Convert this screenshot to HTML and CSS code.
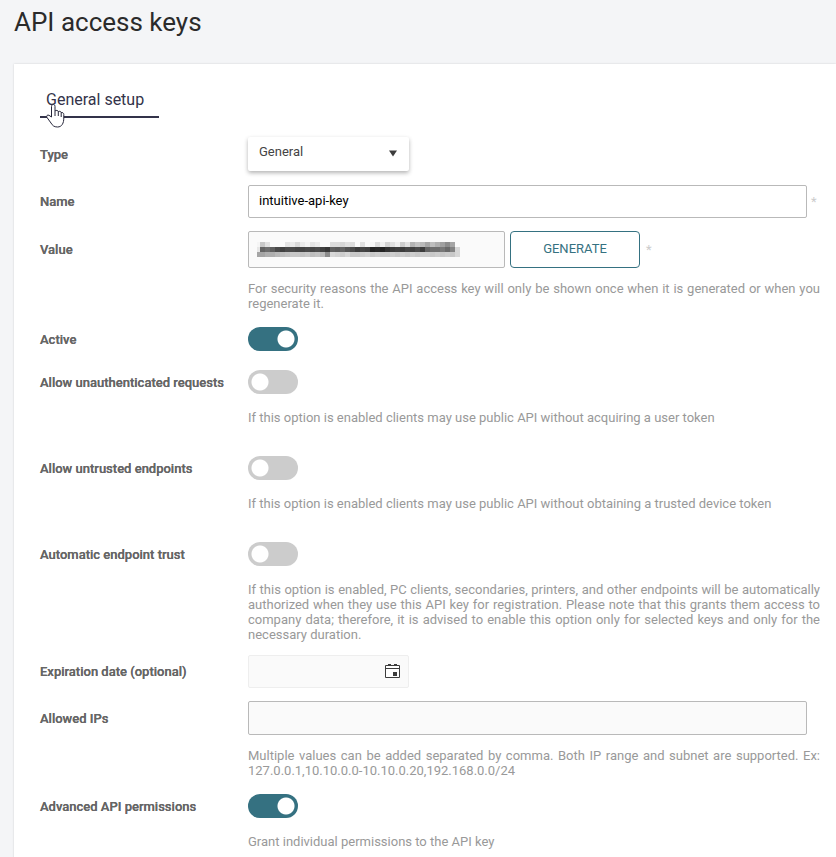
FILE: index.html
```html
<!DOCTYPE html>
<html lang="en">
  <head>
    <meta charset="UTF-8" />
    <meta name="viewport" content="width=device-width, initial-scale=1.0" />
    <title>API access keys</title>
    <link rel="stylesheet" href="styles.css">
  </head>
  <body>
    <h1 class="page-title">API access keys</h1>
    <main class="card">
      <nav class="tabs">
        <a class="tab" href="#general">General setup
          <svg class="pointer" width="20" height="26" viewBox="0 0 20 26">
            <path d="M5.500 14V3.500C5.500 .8 9 .8 9 3.500V8C10 7 12 7.200 12.300 8.600C13.500 8 15 8.300 15.200 9.600C16.500 9.200 17.800 10 17.800 11.500V15C17.800 20 16 24 11.500 24C8 24 6.500 22.500 5 20L1 14.500C0 12.800 1.500 11.500 3 12.300Z" fill="#fff" stroke="#26263a"/>
            <path d="M9 8v5M12.300 8.600V13M15.200 9.600V14" fill="none" stroke="#26263a"/>
          </svg>
        </a>
      </nav>
      <form class="form" id="general">
        <label for="type">Type</label>
        <div class="field type-field">
          <div class="select-box">
            <select id="type"><option>General</option><option>Custom</option></select>
            <svg class="caret" width="9" height="7" viewBox="0 0 9 7"><path d="M0 0h9L4.500 7z" fill="#3c3c3c"/></svg>
          </div>
        </div>

        <label for="name">Name</label>
        <div class="field">
          <input class="text-input" type="text" id="name" value="intuitive-api-key" />
          <span class="required">*</span>
        </div>

        <label for="value">Value</label>
        <div class="field">
          <div class="value-box">
            <input class="text-input tall" type="text" id="value" disabled />
            <svg class="mask" id="mask" width="206" height="20" shape-rendering="crispEdges"></svg>
          </div>
          <button class="generate" type="button">GENERATE</button>
          <span class="required">*</span>
        </div>
        <p class="help">For security reasons the API access key will only be shown once when it is generated or when you regenerate it.</p>

        <label for="active">Active</label>
        <div class="field"><input class="toggle" type="checkbox" id="active" checked /></div>

        <label for="unauth">Allow unauthenticated requests</label>
        <div class="field"><input class="toggle" type="checkbox" id="unauth" /></div>
        <p class="help">If this option is enabled clients may use public API without acquiring a user token</p>

        <label for="untrusted">Allow untrusted endpoints</label>
        <div class="field"><input class="toggle" type="checkbox" id="untrusted" /></div>
        <p class="help">If this option is enabled clients may use public API without obtaining a trusted device token</p>

        <label for="trust">Automatic endpoint trust</label>
        <div class="field"><input class="toggle" type="checkbox" id="trust" /></div>
        <p class="help">If this option is enabled, PC clients, secondaries, printers, and other endpoints will be automatically authorized when they use this API key for registration. Please note that this grants them access to company data; therefore, it is advised to enable this option only for selected keys and only for the necessary duration.</p>

        <label for="expires">Expiration date (optional)</label>
        <div class="field">
          <div class="date-box">
            <input class="date-input" type="text" id="expires" />
            <button class="calendar" type="button" aria-label="Pick a date">
              <svg width="15" height="16" viewBox="0 0 15 16">
                <path d="M.5 2.500h14v12H.5z" fill="#fff" stroke="#3c3c3c"/>
                <path d="M1 5.500h13" stroke="#3c3c3c"/>
                <path d="M3 1h3v2H3zM9 1h3v2H9zM8 9h4v4H8z" fill="#3c3c3c"/>
              </svg>
            </button>
          </div>
        </div>

        <label for="ips">Allowed IPs</label>
        <div class="field">
          <input class="text-input muted" type="text" id="ips" />
          <span class="required"></span>
        </div>
        <p class="help">Multiple values can be added separated by comma. Both IP range and subnet are supported. Ex: 127.0.0.1,10.10.0.0-10.10.0.20,192.168.0.0/24</p>

        <label for="advanced">Advanced API permissions</label>
        <div class="field"><input class="toggle" type="checkbox" id="advanced" checked /></div>
        <p class="help">Grant individual permissions to the API key</p>
      </form>
    </main>
    <script src="mask.js"></script>
  </body>
</html>
```
FILE: styles.css
```css
* {
  box-sizing: border-box;
}

body {
  margin: 0;
  background-color: #f4f5f7;
  font-family: Roboto, sans-serif;
  font-size: 13px;
  line-height: 15px;
  color: #444;
  overflow-x: hidden;
}

.page-title {
  margin: 0;
  padding: 6px 14px 26px;
  font-size: 26px;
  font-weight: 400;
  line-height: 32px;
  color: #2b2b2b;
}

.card {
  margin-left: 14px;
  padding: 20px 16px 8px 26px;
  background-color: #fff;
  box-shadow: 0 0 2px rgba(0, 0, 0, 0.15);
}

.tabs {
  display: flex;
  margin-bottom: 19px;
}

.tab {
  position: relative;
  padding: 7px 15px 7px 6px;
  border-bottom: 2px solid #33334a;
  font-size: 16px;
  line-height: 18px;
  color: #33334a;
  text-decoration: none;
}

/* hand cursor drawn over the tab */
.pointer {
  position: absolute;
  left: 6px;
  top: 19px;
}

.form {
  display: grid;
  grid-template-columns: 208px minmax(0, 1fr);
  row-gap: 13px;
  align-items: center;
}

.form label {
  font-weight: 500;
  color: #666;
  text-shadow: 0 0 0 #666;
}

.field {
  display: flex;
  align-items: center;
}

.type-field {
  padding-bottom: 1px;
}

.select-box,
.date-box {
  position: relative;
  width: 161px;
}

select {
  display: block;
  width: 100%;
  height: 34px;
  padding: 0 11px 5px;
  appearance: none;
  border: none;
  border-radius: 2px;
  background-color: #fff;
  box-shadow: 0 2px 4px rgba(0, 0, 0, 0.3);
  font: inherit;
  color: #444;
}

.caret {
  position: absolute;
  right: 12px;
  top: 13px;
  width: 8px;
  pointer-events: none;
}

.text-input {
  flex: 1;
  width: 100%;
  min-width: 0;
  height: 33px;
  padding: 0 10px 2px;
  border: 1px solid #b9b9b9;
  border-radius: 2px;
  font: inherit;
  color: #000;
}

.tall {
  height: 37px;
}

.muted,
.text-input:disabled {
  background-color: #fafafa;
}

.muted {
  height: 34px;
}

.required {
  width: 13px;
  padding-left: 4px;
  color: #ccc;
}

.value-box {
  position: relative;
  width: 257px;
}

.mask {
  position: absolute;
  left: 9px;
  top: 11px;
}

.generate {
  width: 130px;
  height: 37px;
  margin: 0 2px 0 5px;
  padding: 0 0 2px;
  border: 1px solid #357181;
  border-radius: 4px;
  background-color: #fff;
  font: inherit;
  color: #357181;
}

.help {
  grid-column: 2;
  min-height: 30px;
  margin: 0;
  color: #999;
  text-align: justify;
}

.toggle {
  width: 50px;
  height: 24px;
  margin: 3px 0;
  appearance: none;
  border-radius: 12px;
  background: #ccc radial-gradient(circle at 12px 12px, #fff 8px, transparent 9px);
}

.toggle:checked {
  background: #357181 radial-gradient(circle at 38px 12px, #fff 8px, transparent 9px);
}

.date-input {
  display: block;
  width: 100%;
  height: 33px;
  padding: 0 32px 0 10px;
  border: 1px solid #eee;
  border-radius: 2px;
  background-color: #fafafa;
  font: inherit;
}

.calendar {
  position: absolute;
  right: 9px;
  top: 8px;
  padding: 0;
  border: none;
  background: none;
  line-height: 0;
}
```
FILE: mask.js
```js
// grey levels of the blocks that hide the key, one array per row
const rows = [
  [245, 200, 225, 250, 250, 250, 228, 235, 218, 236, 245, 228, 235, 250, 250, 220, 220, 215, 225, 220, 250, 225, 250, 245, 220, 240, 212, 225, 240, 205, 225, 180, 195, 185, 165, 190, 175, 160, 140, 165, 250],
  [230, 100, 110, 95, 75, 65, 75, 75, 70, 70, 75, 70, 75, 65, 55, 95, 90, 100, 85, 75, 60, 70, 65, 35, 40, 35, 50, 60, 65, 60, 70, 65, 75, 60, 100, 110, 110, 120, 105, 130, 215],
  [165, 165, 175, 175, 185, 190, 195, 200, 200, 195, 200, 190, 195, 185, 140, 215, 210, 205, 215, 200, 200, 205, 210, 200, 205, 200, 200, 205, 200, 205, 200, 205, 200, 205, 205, 200, 205, 200, 205, 200, 215],
];
const mask = document.getElementById("mask");

rows.forEach((row, y) => {
  row.forEach((level, i) => {
    const rect = document.createElementNS("http://www.w3.org/2000/svg", "rect");
    rect.setAttribute("x", i === 0 ? 0 : i * 5 - 2);
    rect.setAttribute("y", y * 5);
    rect.setAttribute("width", i === 0 ? 3 : 5);
    rect.setAttribute("height", 5);
    rect.setAttribute("fill", `rgb(${level}, ${level}, ${level})`);
    mask.appendChild(rect);
  });
});
```
